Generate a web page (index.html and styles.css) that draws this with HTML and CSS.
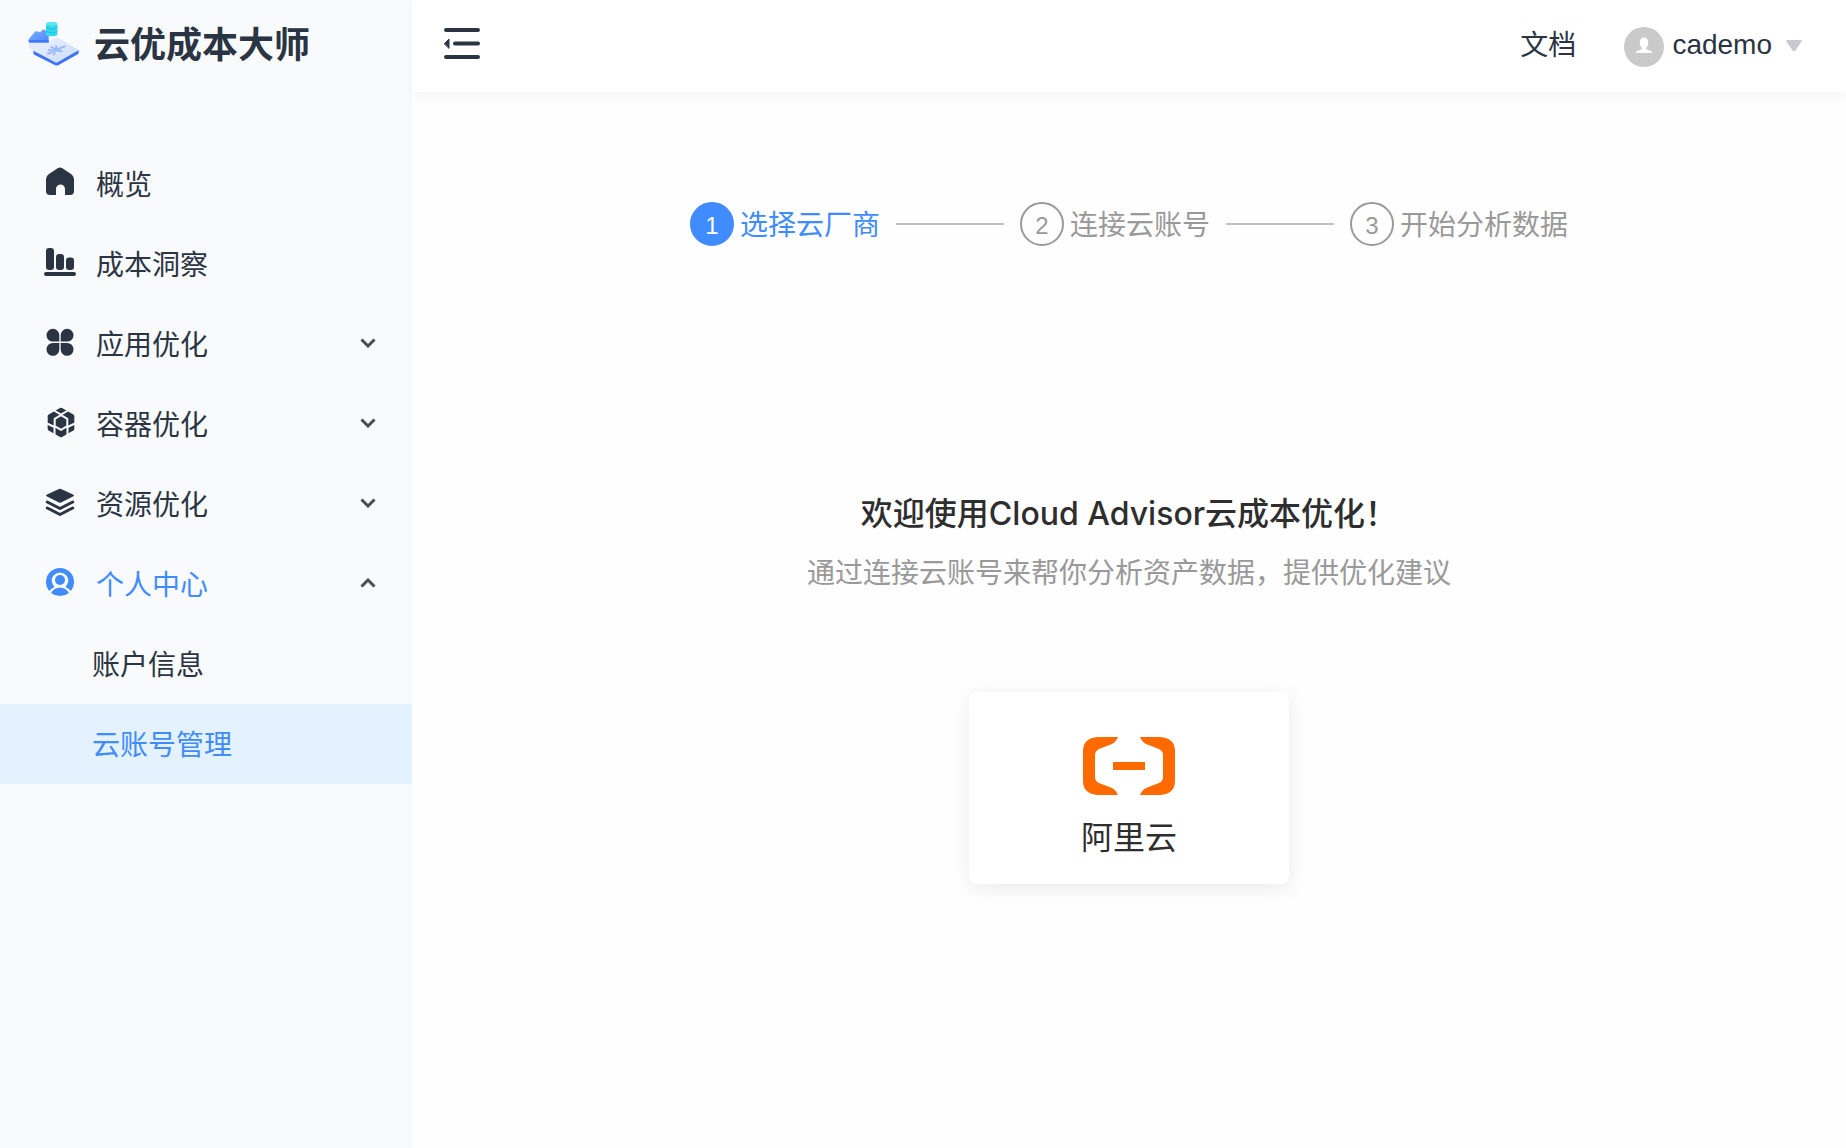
FILE: index.html
```html
<!DOCTYPE html>
<html lang="zh-CN">
<head>
<meta charset="utf-8">
<title>云优成本大师</title>
<link rel="stylesheet" href="styles.css">
</head>
<body>
<div class="app">
  <aside class="sidebar">
    <a class="brand" href="#">
      <svg class="brand-logo" viewBox="0 0 153 132" aria-hidden="true">
        <defs>
          <linearGradient id="slab" x1="0" y1="0" x2="1" y2="1"><stop offset="0" stop-color="#eef3ff"/><stop offset="1" stop-color="#c9dafd"/></linearGradient>
          <linearGradient id="arrow" x1="0" y1="0" x2="1" y2="1"><stop offset="0" stop-color="#7fb0ff"/><stop offset="1" stop-color="#4a86fa"/></linearGradient>
        </defs>
        <path d="M0 62h66l20 14-60 18L4 78z" fill="#e3ecfe"/>
        <path d="M16 86l70 35 66-37v8q0 3-3 5l-57 32q-6 3-12 0L19 98q-3-2-3-5z" fill="#3f74f6"/>
        <path d="M16 85l64-37q6-3 12 0l60 36-62 36q-5 3-10 0z" fill="url(#slab)"/>
        <path d="M58 96l54-24M68 74l18 10-2-14M60 84l44 4M76 100l8-16" fill="none" stroke="#9dbbfb" stroke-width="6"/>
        <path d="M2 52L20 30q2-3 6-2l10 3 10-9 16 9v29H4q-3-4-2-8z" fill="url(#arrow)"/>
        <path d="M2 54h60v8H6q-4 0-4-4z" fill="#3f78f8"/>
        <path d="M54 6q0-6 17-6t17 6v31q0 6-17 6t-17-6z" fill="#35d9ea"/>
        <ellipse cx="71" cy="6" rx="17" ry="5" fill="#5ce9ef"/>
        <path d="M54 17q17 9 34 0M54 28q17 9 34 0" fill="none" stroke="#25b9ec" stroke-width="3"/>
      </svg>
      <span>云优成本大师</span>
    </a>
    <nav class="menu">
      <a class="menu-item" href="#">
        <svg class="menu-icon" viewBox="0 0 36 36" aria-hidden="true"><path d="M16 2q2-1 4 0l9 6q3 2 3 5v12q0 4-4 4h-5v-6a4.500 4.500 0 0 0-9 0v6H8q-4 0-4-4V13q0-3 3-5z"/></svg>
        <span>概览</span>
      </a>
      <a class="menu-item" href="#">
        <svg class="menu-icon" viewBox="0 0 36 36" aria-hidden="true"><rect x="4" y="2" width="8" height="22" rx="3"/><rect x="14" y="8" width="8" height="16" rx="3"/><rect x="24" y="11.500" width="8" height="12.500" rx="3"/><rect x="2" y="26" width="32" height="4" rx="2"/></svg>
        <span>成本洞察</span>
      </a>
      <button class="menu-item" type="button" aria-expanded="false">
        <svg class="menu-icon" viewBox="0 0 36 36" aria-hidden="true"><path d="M17.300 15.600V9.200A6.400 6.400 0 1 0 10.900 15.600z"/><path d="M18.700 15.600V9.200A6.400 6.400 0 1 1 25.100 15.600zM17.300 17v6.400A6.400 6.400 0 1 1 10.900 17zM18.700 17v6.400A6.400 6.400 0 1 0 25.100 17z"/></svg>
        <span>应用优化</span>
        <svg class="chevron" viewBox="0 0 16 10" aria-hidden="true"><path d="M1.500 1.500L8 8l6.500-6.500"/></svg>
      </button>
      <button class="menu-item" type="button" aria-expanded="false">
        <svg class="menu-icon" viewBox="0 0 36 36" aria-hidden="true">
          <path d="M18 2q1-.5 2 0l11.300 6.500q1 .6 1 1.800v12.400q0 1.200-1 1.800L20 31q-1 .5-2 0L6.700 24.500q-1-.6-1-1.800V10.300q0-1.200 1-1.800z"/>
          <path class="gap" d="M12 4.500l7 4 7-4M5 17.500l7.500 3.500v9M33 17.500L25.500 21v9M19 9.200l6.300 3.600v7.400L19 23.800l-6.300-3.600v-7.400z"/>
        </svg>
        <span>容器优化</span>
        <svg class="chevron" viewBox="0 0 16 10" aria-hidden="true"><path d="M1.500 1.500L8 8l6.500-6.500"/></svg>
      </button>
      <button class="menu-item" type="button" aria-expanded="false">
        <svg class="menu-icon" viewBox="0 0 36 36" aria-hidden="true"><path d="M17 3q1-.5 2 0l12 5.500q2 1 0 2L19 16.500q-1 .5-2 0L5 10.500q-2-1 0-2z"/><path class="line" d="M5.300 16L18 22.500 30.700 16M5.300 22L18 28.500 30.700 22"/></svg>
        <span>资源优化</span>
        <svg class="chevron" viewBox="0 0 16 10" aria-hidden="true"><path d="M1.500 1.500L8 8l6.500-6.500"/></svg>
      </button>
      <button class="menu-item is-open" type="button" aria-expanded="true">
        <svg class="menu-icon" viewBox="0 0 36 36" aria-hidden="true"><path d="M7.300 25A14 14 0 1 1 28.700 25Q27 22.300 23.500 21a8.300 8.300 0 1 0-11 0Q9 22.300 7.300 25z"/><circle cx="18" cy="14" r="5"/><path d="M9 27q3-5.200 9-5.200t9 5.200q-4 3-9 3t-9-3z"/></svg>
        <span>个人中心</span>
        <svg class="chevron" viewBox="0 0 16 10" aria-hidden="true"><path d="M1.500 8.500L8 2l6.500 6.500"/></svg>
      </button>
      <a class="menu-item sub" href="#">账户信息</a>
      <a class="menu-item sub is-active" href="#" aria-current="page">云账号管理</a>
    </nav>
  </aside>

  <div class="page">
    <header class="topbar">
      <button class="collapse" type="button" aria-label="收起菜单">
        <svg viewBox="0 0 36 32" aria-hidden="true"><path d="M2 2h32M11 15.500h23M2 29h32"/><path class="tip" d="M.5 15.500l4.500-4.500v9z"/></svg>
      </button>
      <a class="docs" href="#">文档</a>
      <button class="account" type="button">
        <svg class="avatar" viewBox="0 0 40 40" aria-hidden="true"><circle cx="20" cy="20" r="20" fill="#cacaca"/><path d="M20 10.500c3 0 4.200 2 4.200 5 0 2.500-1 4.300-2 5.200-.3 1.300.3 1.800 2 2.200 2.300.5 4 1.200 4.300 3.100h-17c.3-1.900 2-2.600 4.300-3.100 1.700-.4 2.300-.9 2-2.200-1-.9-2-2.700-2-5.200 0-3 1.200-5 4.200-5z" fill="#fff"/></svg>
        <span class="account-name">cademo</span>
        <svg class="caret" viewBox="0 0 16 12" aria-hidden="true"><path d="M1.500 0h13q2 0 1 1.500l-6 9q-1.500 2-3 0l-6-9Q-.5 0 1.500 0z"/></svg>
      </button>
    </header>

    <main class="content">
      <ol class="steps">
        <li class="step is-current"><span class="num">1</span><span class="step-name">选择云厂商</span></li>
        <li class="step"><span class="num">2</span><span class="step-name">连接云账号</span></li>
        <li class="step"><span class="num">3</span><span class="step-name">开始分析数据</span></li>
      </ol>
      <h1 class="title">欢迎使用Cloud Advisor云成本优化！</h1>
      <p class="subtitle">通过连接云账号来帮你分析资产数据，提供优化建议</p>
      <button class="vendor" type="button">
        <svg class="vendor-logo" viewBox="0 0 93 60" aria-hidden="true"><path d="M35 1H15Q0 2 0 15v30q0 13 15 14h20q-2-5-6-7l-13-5q-4-2-4-6V19q0-4 4-6l13-5q4-2 6-7zM57 1h20q15 1 15 14v30q0 13-15 14H57q2-5 6-7l13-5q4-2 4-6V19q0-4-4-6L63 8q-4-2-6-7zM30 26h32v8H30z"/></svg>
        <span>阿里云</span>
      </button>
    </main>
  </div>
</div>
</body>
</html>
```
FILE: styles.css
```css
* {
  box-sizing: border-box;
}

body {
  margin: 0;
  background: #fefefe;
  color: #2b3442;
  font-family: "Liberation Sans", "Noto Sans CJK SC", sans-serif;
  font-size: 28px;
  line-height: 40px;
}

a {
  color: inherit;
  text-decoration: none;
}

button {
  padding: 0;
  border: 0;
  background: none;
  color: inherit;
  font: inherit;
  cursor: pointer;
}

svg {
  display: block;
  flex: none;
}

.app {
  display: flex;
  min-height: 100vh;
}

/* Sidebar */
.sidebar {
  flex: none;
  width: 412px;
  background: #f8fafc;
}

.brand {
  display: flex;
  align-items: center;
  gap: 15px;
  height: 92px;
  padding-left: 28px;
  font-size: 36px;
  font-weight: 700;
}

.brand-logo {
  width: 51px;
  height: 44px;
  margin-bottom: 4px;
}

.menu {
  padding-top: 52px;
}

.menu-item {
  display: flex;
  align-items: center;
  width: 100%;
  height: 80px;
  padding: 4px 36px 0 42px;
  text-align: left;
}

.menu-icon {
  width: 36px;
  height: 36px;
  margin: 0 18px 4px 0;
  fill: currentColor;
}

.line {
  fill: none;
  stroke: currentColor;
  stroke-width: 3;
  stroke-linecap: round;
  stroke-linejoin: round;
}

.gap {
  fill: none;
  stroke: #f8fafc;
  stroke-width: 2;
}

.chevron {
  width: 16px;
  height: 10px;
  margin: 0 0 6px auto;
  fill: none;
  stroke: #4a4d52;
  stroke-width: 3;
}

.menu-item.sub {
  padding-left: 92px;
}

.is-open,
.is-active {
  color: #408cff;
}

.is-active {
  background: #e4f1ff;
}

/* Top bar */
.page {
  flex: 1;
  min-width: 0;
}

.topbar {
  display: flex;
  align-items: center;
  height: 92px;
  padding: 0 44px 0 32px;
  background: #fff;
  box-shadow: 0 4px 12px rgba(0, 0, 0, 0.04);
}

.collapse {
  padding-bottom: 4px;
}

.collapse svg {
  width: 36px;
  height: 32px;
  fill: none;
  stroke: currentColor;
  stroke-width: 4;
  stroke-linecap: round;
}

.collapse .tip {
  fill: currentColor;
  stroke-width: 1;
}

.docs {
  margin-left: auto;
}

.account {
  display: flex;
  align-items: center;
  margin-left: 48px;
}

.avatar {
  width: 40px;
  height: 40px;
  margin: 2px 8px 0 0;
}

.account-name {
  padding-bottom: 2px;
}

.caret {
  width: 16px;
  height: 12px;
  margin-left: 14px;
  fill: #c8c9d2;
}

/* Content */
.content {
  display: flex;
  flex-direction: column;
  align-items: center;
  padding: 110px 24px 48px;
}

.steps {
  display: flex;
  gap: 16px;
  margin: 0;
  padding: 0;
  list-style: none;
  color: #999;
}

.step {
  display: flex;
  align-items: center;
  gap: 6px;
}

.step:not(:last-child)::after {
  content: "";
  width: 108px;
  height: 2px;
  margin-left: 10px;
  background: #bfbfbf;
}

.step-name {
  padding-top: 4px;
}

.num {
  width: 44px;
  height: 44px;
  padding-top: 2px;
  border: 2px solid #999;
  border-radius: 50%;
  font-size: 24px;
  text-align: center;
}

.step.is-current {
  color: #408cff;
}

.is-current .num {
  border-color: #408cff;
  background: #408cff;
  color: #fff;
}

.title {
  margin: 244px 0 0;
  color: #2e2e2e;
  font-family: Inter, "Noto Sans CJK SC", sans-serif;
  font-size: 32px;
  font-weight: 500;
  line-height: 48px;
}

.subtitle {
  margin: 16px 0 0;
  color: #999;
}

.vendor {
  display: flex;
  flex-direction: column;
  align-items: center;
  gap: 22px;
  width: 320px;
  margin-top: 98px;
  padding: 44px 0 26px;
  border-radius: 8px;
  background: #fff;
  box-shadow: 0 4px 20px rgba(0, 0, 0, 0.08);
  color: #2e2e2e;
  font-size: 32px;
}

.vendor-logo {
  width: 93px;
  height: 60px;
  fill: #ff6a00;
}
```
